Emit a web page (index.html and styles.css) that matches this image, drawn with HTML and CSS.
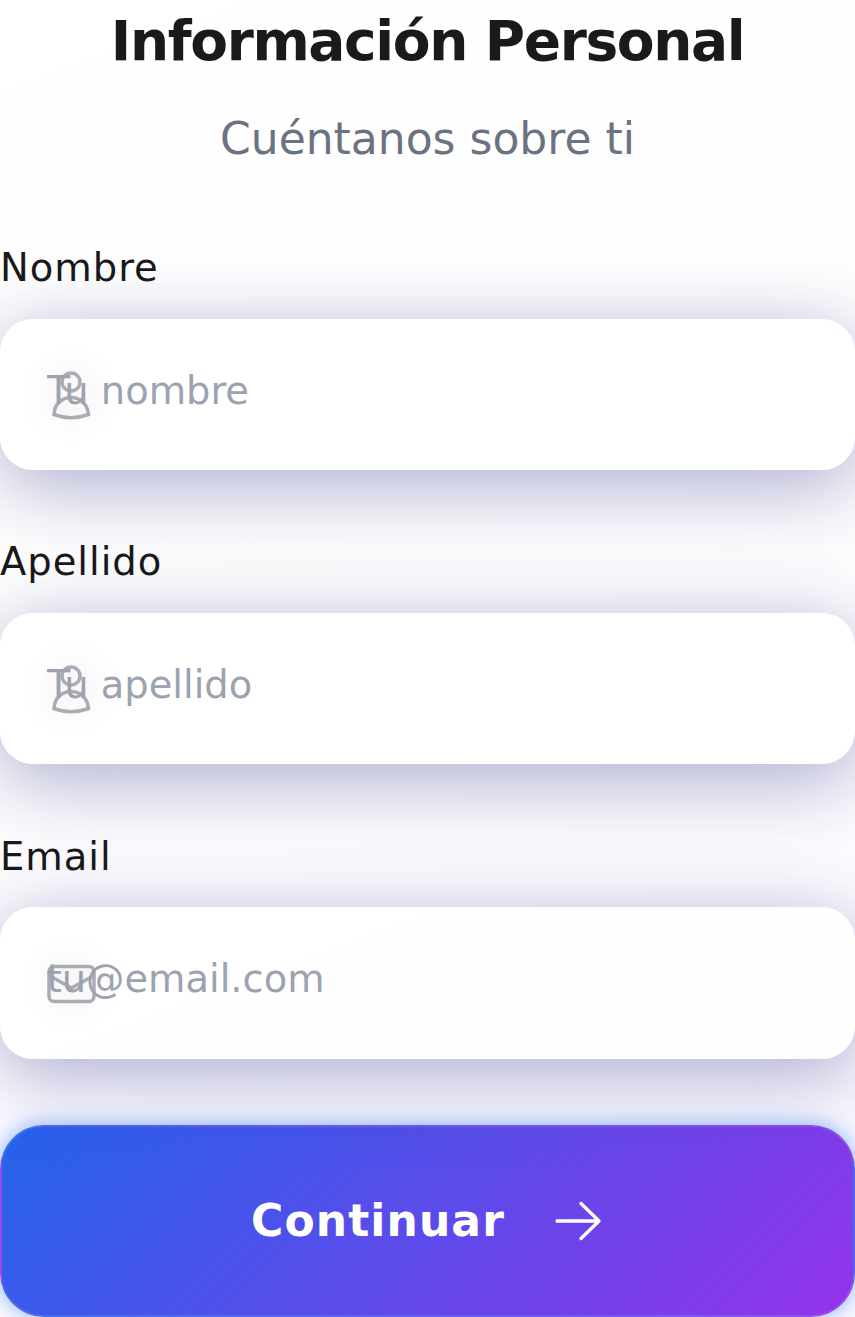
FILE: index.html
```html
<!DOCTYPE html>
<html lang="es">
<head>
<meta charset="utf-8">
<title>Información Personal</title>
<link rel="stylesheet" href="styles.css">
</head>
<body>
<main class="form">
  <h1 class="title">Información Personal</h1>
  <p class="subtitle">Cuéntanos sobre ti</p>
  <div class="group">
    <label class="label" for="nombre">Nombre</label>
    <div class="field">
      <input class="input" id="nombre" type="text" placeholder="Tu nombre">
      <svg class="icon" viewBox="0 0 48 48"><circle cx="24" cy="11" r="9"/><path d="M7 43.500C7.500 33 15 26.500 24 26.500S40.500 33 41.500 43.500Q24 50 7 43.500Z"/></svg>
    </div>
  </div>
  <div class="group">
    <label class="label" for="apellido">Apellido</label>
    <div class="field">
      <input class="input" id="apellido" type="text" placeholder="Tu apellido">
      <svg class="icon" viewBox="0 0 48 48"><circle cx="24" cy="11" r="9"/><path d="M7 43.500C7.500 33 15 26.500 24 26.500S40.500 33 41.500 43.500Q24 50 7 43.500Z"/></svg>
    </div>
  </div>
  <div class="group">
    <label class="label" for="email">Email</label>
    <div class="field">
      <input class="input" id="email" type="email" placeholder="tu@email.com">
      <svg class="icon" viewBox="0 0 48 48"><rect x="2" y="7.500" width="45" height="35" rx="5"/><path d="M3 17L24.500 29L46 17"/></svg>
    </div>
  </div>
  <button class="button" type="button">
    <span>Continuar</span>
    <svg class="arrow" viewBox="0 0 48 48"><path d="M3 24H45M27 6.500L45 24L27 41.500"/></svg>
  </button>
</main>
</body>
</html>
```
FILE: styles.css
```css
* { box-sizing: border-box; }
body { margin: 0; overflow: hidden; font-family: "DejaVu Sans", sans-serif; color: #1a1a1a; background: linear-gradient(160deg, #fff 0%, #fefefe 40%, #fbf9ff 100%); }
.form { display: flex; flex-direction: column; height: 1317px; }
.title { margin: 8px 0 0; font-size: 55px; line-height: 66px; letter-spacing: -1.375px; text-align: center; }
.subtitle { margin: 32px 0 66px; height: 66px; flex: none; font-size: 44px; line-height: 66px; text-align: center; color: #6b7280; }
.group { display: flex; flex-direction: column; height: 231.300px; flex: none; }
.group + .group { margin-top: 63.100px; }
.label { height: 58px; flex: none; font-size: 38.500px; line-height: 59px; letter-spacing: .96px; }
.field { position: relative; margin-top: 22.600px; height: 151.250px; flex: none; border-radius: 33px; background: rgba(255,255,255,.8); box-shadow: 0 22px 88px rgba(76,70,150,.22), 0 11px 66px rgba(58,68,145,.26); }
.input { position: relative; z-index: 1; width: 100%; height: 143px; padding: 0 46.700px; border: 0; outline: 0; background: transparent; font: 38.400px "DejaVu Sans", sans-serif; }
.input::placeholder { color: #9ca3af; opacity: 1; }
.icon { position: absolute; left: 47px; top: 52px; width: 48px; height: 48px; fill: none; stroke: #acabb3; stroke-width: 3.500; overflow: visible; border-radius: 50%; background: rgba(0,0,0,.022); box-shadow: 0 0 30px 10px rgba(0,0,0,.027); }
.button { display: flex; align-items: center; justify-content: center; gap: 49px; margin-top: 66.600px; height: 192px; flex: none; padding: 0 2px 0 0; border: 2.750px solid rgba(255,255,255,.1); border-radius: 44px; background: linear-gradient(135deg, #2563eb, #9333ea); color: #fff; font: bold 44px "DejaVu Sans", sans-serif; letter-spacing: 1.1px; box-shadow: 0 0 22px rgba(59,130,246,.6); }
.arrow { width: 48px; height: 48px; fill: none; stroke: white; stroke-width: 3.300; stroke-linecap: round; stroke-linejoin: round; }
```
